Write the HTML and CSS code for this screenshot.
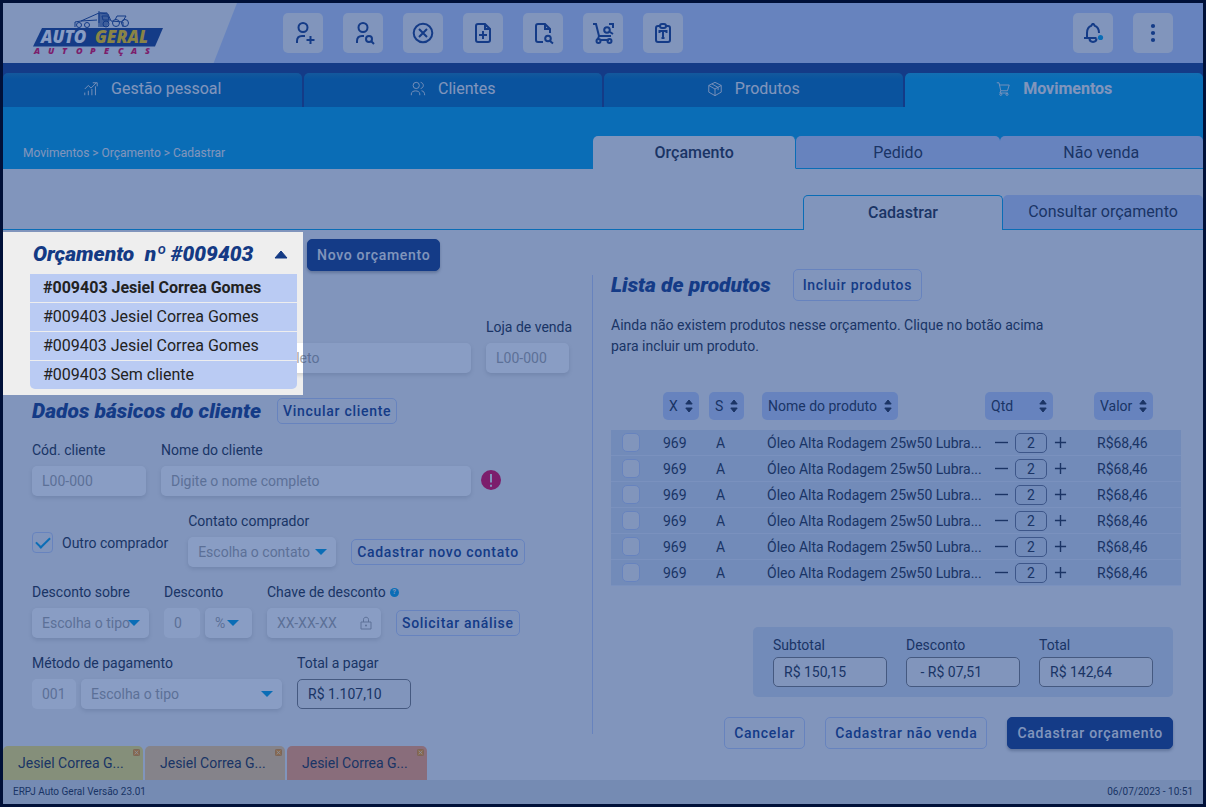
FILE: index.html
```html
<!DOCTYPE html>
<html lang="pt-BR">
<head>
<meta charset="utf-8">
<title>ERPJ Auto Geral - Orçamento</title>
<meta name="viewport" content="width=device-width, initial-scale=1">
<link rel="stylesheet" href="styles.css">
</head>
<body>
<svg class="sprite" aria-hidden="true">
  <symbol id="sort" viewBox="0 0 8 14"><path d="M4 1 7.2 5H.8zM4 13 .8 9h6.400z" fill="currentColor" stroke="currentColor" stroke-width="1" stroke-linejoin="round"/></symbol>
  <symbol id="minus" viewBox="0 0 14 14"><path d="M0 7h14" stroke="currentColor" stroke-width="1.500"/></symbol>
  <symbol id="plus" viewBox="0 0 14 14"><path d="M1 7h12M7 1v12" stroke="currentColor" stroke-width="1.500"/></symbol>
  <symbol id="close" viewBox="0 0 8 8"><rect x=".5" y=".5" width="7" height="7" rx="1" fill="#ff9a1a" stroke="#e08a20"/><path d="M2 2l4 4M6 2 2 6" stroke="#fff0c8" stroke-width=".8"/></symbol>
</svg>
<div class="app">
  <header class="header">
    <div class="brand">
      <svg class="logo" viewBox="0 0 132 50" role="img" aria-label="Auto Geral Autopeças">
        <g fill="none" stroke="#143a84" stroke-width="1">
          <path d="M42 18v-5l6-1 18-8v10M66 2v16M67 4l8 1 3 7 12 1v5M69 7h6l1 4h-6zM48 12l16-1M90 12l3-5h-9l-2 4"/>
          <circle cx="46" cy="16" r="2.500"/><circle cx="54" cy="16" r="2.500"/><circle cx="73" cy="15" r="3"/><circle cx="83" cy="14" r="3.500"/><circle cx="92" cy="14" r="3.500"/>
        </g>
        <path d="M66 3h8l3 8-3 7h-7z" fill="#143a84" opacity=".6"/>
        <path d="M9 19H130l-8 18.500H0z" fill="#143a84"/>
        <text x="8" y="34" class="logo-main" fill="#fff">AUTO<tspan x="62" fill="#ffcc00">GERAL</tspan></text>
        <text y="45" class="logo-sub" fill="#e4004f" x="1 15 29 43 57 71 85 98 112">AUTOPEÇAS</text>
      </svg>
    </div>
    <div class="toolbar">
      <button class="tool" aria-label="Adicionar cliente"><svg viewBox="0 0 24 24"><circle cx="12" cy="6.500" r="4.500"/><path d="M6 22v-2c0-3 2-5 5-5h3M19.500 15v8M15.500 19h8"/></svg></button>
      <button class="tool" aria-label="Buscar cliente"><svg viewBox="0 0 24 24"><circle cx="12" cy="6.500" r="4.500"/><path d="M6 22v-2c0-3 2-5 5-5h2M20 20l3 3"/><circle cx="18" cy="18" r="3"/></svg></button>
      <button class="tool" aria-label="Cancelar"><svg viewBox="0 0 24 24"><circle cx="12" cy="12" r="9.300"/><path d="m8 8 8 8M16 8l-8 8"/></svg></button>
      <button class="tool" aria-label="Novo documento"><svg viewBox="0 0 24 24"><path d="M14 3H7a2 2 0 0 0-2 2v14a2 2 0 0 0 2 2h10a2 2 0 0 0 2-2V8zM14 3v5h5M12 10v8M8 14h8"/></svg></button>
      <button class="tool" aria-label="Buscar documento"><svg viewBox="0 0 24 24"><path d="M12 21H7a2 2 0 0 1-2-2V5a2 2 0 0 1 2-2h7l5 5v4M14 3v5h5M19 20l3 2.500"/><circle cx="17" cy="17.500" r="2.800"/></svg></button>
      <button class="tool" aria-label="Buscar vendas"><svg viewBox="0 0 24 24"><path d="M2 3h3l3 12h12M8 15l-1.500 4M18 3h4v4M19 11l3 2M9 19h9"/><circle cx="16" cy="9" r="2.800"/><circle cx="7.500" cy="20" r="2"/><circle cx="18.500" cy="20" r="2"/></svg></button>
      <button class="tool" aria-label="Tabela"><svg viewBox="0 0 24 24"><path d="M9 5H7a2 2 0 0 0-2 2v12a2 2 0 0 0 2 2h10a2 2 0 0 0 2-2V7a2 2 0 0 0-2-2h-2M8.500 12v-2h7v2M12 10v7M10.500 17h3"/><rect x="9" y="3" width="6" height="4" rx="2"/></svg></button>
    </div>
    <div class="toolbar toolbar-end">
      <button class="tool" aria-label="Notificações"><svg viewBox="0 0 24 24"><path d="M3 17h12.500M6 17v-5c0-4 2-6.500 4.300-7.300L11.500 3h1l1.200 1.700C16 5.500 18 8 18 12M8.500 17.500c0 4.500 7 4.500 7 0"/><circle class="dot" cx="19.500" cy="16.500" r="2.600"/></svg></button>
      <button class="tool" aria-label="Mais opções"><svg viewBox="0 0 24 24"><g fill="#143a84" stroke="none"><circle cx="12" cy="5" r="2.100"/><circle cx="12" cy="12" r="2.100"/><circle cx="12" cy="19" r="2.100"/></g></svg></button>
    </div>
  </header>

  <nav class="nav">
    <a class="nav-tab" href="#"><svg viewBox="0 0 18 18"><path d="M2 16v-3M6 16v-5M10 16V9M14 16V6M2 9l4-4 3 3 6-6M11 2h5v4"/></svg>Gestão pessoal</a>
    <a class="nav-tab" href="#"><svg viewBox="0 0 18 18"><circle cx="7" cy="5" r="3.500"/><path d="M1.500 16v-1.500c0-4.500 9.500-4.500 9.500 0V16M12 1.500c4 1 4 6 0 7M13 11c2.500.5 3.500 2 3.500 5"/></svg>Clientes</a>
    <a class="nav-tab" href="#"><svg viewBox="0 0 18 18"><path d="M9 1.500 16 5v7.500L9 16.500l-7-4V5zM2 5l7 4 7-4M9 9v7.500M5.500 3.300l7 4v3"/></svg>Produtos</a>
    <a class="nav-tab nav-tab-active" href="#"><svg viewBox="0 0 18 18"><path d="M2 2h2.500L6.500 11h7.500L16 4.500H5M6.500 11 5.500 13.500h9"/><circle cx="6.500" cy="15" r="1.200"/><circle cx="13.500" cy="15" r="1.200"/></svg>Movimentos</a>
  </nav>

  <div class="subheader">
    <p class="breadcrumb">Movimentos &gt; Orçamento &gt; Cadastrar</p>
    <nav class="section-tabs">
      <a class="section-tab section-tab-active" href="#">Orçamento</a>
      <a class="section-tab" href="#">Pedido</a>
      <a class="section-tab" href="#">Não venda</a>
    </nav>
  </div>

  <div class="mode-bar">
    <a class="mode-tab mode-tab-active" href="#">Cadastrar</a>
    <a class="mode-tab" href="#">Consultar orçamento</a>
  </div>

  <main class="main">
    <section class="customer">
      <div class="customer-head"><button class="btn btn-solid">Novo orçamento</button></div>
      <div class="row row-seller">
        <input class="input w-name" placeholder="Digite o nome completo" aria-label="Nome">
        <div class="field w-store"><label for="store">Loja de venda</label><input id="store" class="input" placeholder="L00-000"></div>
      </div>
      <div class="title-row">
        <h2 class="title">Dados básicos do cliente</h2>
        <button class="btn btn-small">Vincular cliente</button>
      </div>
      <div class="rows">
        <div class="row">
          <div class="field w-code"><label for="cod">Cód. cliente</label><input id="cod" class="input" placeholder="L00-000"></div>
          <div class="field w-name"><label for="name">Nome do cliente</label><input id="name" class="input" placeholder="Digite o nome completo"></div>
          <svg class="alert" viewBox="0 0 20 20" role="img" aria-label="Campo obrigatório"><circle cx="10" cy="10" r="10" fill="#e4004f"/><path d="M10 4v8.500M10 14.800v2" stroke="#eee" stroke-width="2"/></svg>
        </div>
        <div class="row row-buyer">
          <label class="check-label"><input type="checkbox" class="check" checked>Outro comprador</label>
          <div class="field w-contact"><label for="contact">Contato comprador</label><div class="select"><select id="contact" class="input"><option>Escolha o contato</option></select></div></div>
          <button class="btn btn-small">Cadastrar novo contato</button>
        </div>
        <div class="row">
          <div class="field w-type"><label for="dtype">Desconto sobre</label><div class="select"><select id="dtype" class="input"><option>Escolha o tipo</option></select></div></div>
          <div class="field">
            <label for="disc">Desconto</label>
            <div class="pair"><input id="disc" class="input input-flat w-number" placeholder="0"><div class="select select-unit w-unit"><select class="input" aria-label="Unidade"><option>%</option></select></div></div>
          </div>
          <div class="field w-code">
            <div class="label-line"><label for="key">Chave de desconto</label><button class="help" aria-label="Ajuda">?</button></div>
            <div class="locked"><input id="key" class="input" placeholder="XX-XX-XX"><svg viewBox="0 0 12 14"><path d="M1 6h10v7H1zM3.500 6V3.500c0-3 5-3 5 0V6" fill="none" stroke="#a5a5a5"/><circle cx="6" cy="9.500" r="1" fill="#a5a5a5"/></svg></div>
          </div>
          <button class="btn btn-small">Solicitar análise</button>
        </div>
        <div class="row">
          <div class="field w-payment">
            <label for="pay">Método de pagamento</label>
            <div class="pair"><input id="pay" class="input input-flat w-method" placeholder="001"><div class="select grow"><select class="input" aria-label="Tipo de pagamento"><option>Escolha o tipo</option></select></div></div>
          </div>
          <div class="field w-total"><label for="due">Total a pagar</label><input id="due" class="input input-line" value="R$ 1.107,10" readonly></div>
        </div>
      </div>
      <div class="drafts">
        <div class="draft draft-yellow"><span>Jesiel Correa G...</span><button aria-label="Fechar"><svg><use href="#close"/></svg></button></div>
        <div class="draft draft-sand"><span>Jesiel Correa G...</span><button aria-label="Fechar"><svg><use href="#close"/></svg></button></div>
        <div class="draft draft-coral"><span>Jesiel Correa G...</span><button aria-label="Fechar"><svg><use href="#close"/></svg></button></div>
      </div>
    </section>

    <div class="divider"></div>

    <section class="products">
      <div class="title-row products-head">
        <h2 class="title">Lista de produtos</h2>
        <button class="btn">Incluir produtos</button>
      </div>
      <p class="hint">Ainda não existem produtos nesse orçamento. Clique no botão acima para incluir um produto.</p>
      <table class="table">
        <colgroup><col class="c-check"><col class="c-x"><col class="c-s"><col class="c-name"><col class="c-qty"><col class="c-value"></colgroup>
        <thead>
          <tr>
            <th></th>
            <th><button class="sort">X<svg><use href="#sort"/></svg></button></th>
            <th><button class="sort">S<svg><use href="#sort"/></svg></button></th>
            <th><button class="sort">Nome do produto<svg><use href="#sort"/></svg></button></th>
            <th><button class="sort sort-wide">Qtd<svg><use href="#sort"/></svg></button></th>
            <th><button class="sort">Valor<svg><use href="#sort"/></svg></button></th>
          </tr>
        </thead>
        <tbody>
          <tr><td><input type="checkbox" class="pick" aria-label="Selecionar"></td><td>969</td><td class="t-s">A</td><td class="t-name">Óleo Alta Rodagem 25w50 Lubra...</td><td><div class="qty"><button aria-label="Menos"><svg><use href="#minus"/></svg></button><input value="2" aria-label="Quantidade"><button aria-label="Mais"><svg><use href="#plus"/></svg></button></div></td><td class="t-value">R$68,46</td></tr>
          <tr><td><input type="checkbox" class="pick" aria-label="Selecionar"></td><td>969</td><td class="t-s">A</td><td class="t-name">Óleo Alta Rodagem 25w50 Lubra...</td><td><div class="qty"><button aria-label="Menos"><svg><use href="#minus"/></svg></button><input value="2" aria-label="Quantidade"><button aria-label="Mais"><svg><use href="#plus"/></svg></button></div></td><td class="t-value">R$68,46</td></tr>
          <tr><td><input type="checkbox" class="pick" aria-label="Selecionar"></td><td>969</td><td class="t-s">A</td><td class="t-name">Óleo Alta Rodagem 25w50 Lubra...</td><td><div class="qty"><button aria-label="Menos"><svg><use href="#minus"/></svg></button><input value="2" aria-label="Quantidade"><button aria-label="Mais"><svg><use href="#plus"/></svg></button></div></td><td class="t-value">R$68,46</td></tr>
          <tr><td><input type="checkbox" class="pick" aria-label="Selecionar"></td><td>969</td><td class="t-s">A</td><td class="t-name">Óleo Alta Rodagem 25w50 Lubra...</td><td><div class="qty"><button aria-label="Menos"><svg><use href="#minus"/></svg></button><input value="2" aria-label="Quantidade"><button aria-label="Mais"><svg><use href="#plus"/></svg></button></div></td><td class="t-value">R$68,46</td></tr>
          <tr><td><input type="checkbox" class="pick" aria-label="Selecionar"></td><td>969</td><td class="t-s">A</td><td class="t-name">Óleo Alta Rodagem 25w50 Lubra...</td><td><div class="qty"><button aria-label="Menos"><svg><use href="#minus"/></svg></button><input value="2" aria-label="Quantidade"><button aria-label="Mais"><svg><use href="#plus"/></svg></button></div></td><td class="t-value">R$68,46</td></tr>
          <tr><td><input type="checkbox" class="pick" aria-label="Selecionar"></td><td>969</td><td class="t-s">A</td><td class="t-name">Óleo Alta Rodagem 25w50 Lubra...</td><td><div class="qty"><button aria-label="Menos"><svg><use href="#minus"/></svg></button><input value="2" aria-label="Quantidade"><button aria-label="Mais"><svg><use href="#plus"/></svg></button></div></td><td class="t-value">R$68,46</td></tr>
        </tbody>
      </table>
      <div class="totals">
        <div class="field w-total"><label for="sub">Subtotal</label><input id="sub" class="input input-line" value="R$ 150,15" readonly></div>
        <div class="field w-total"><label for="off">Desconto</label><input id="off" class="input input-line" value=" - R$ 07,51" readonly></div>
        <div class="field w-total"><label for="tot">Total</label><input id="tot" class="input input-line" value="R$ 142,64" readonly></div>
      </div>
      <div class="actions">
        <button class="btn">Cancelar</button>
        <button class="btn">Cadastrar não venda</button>
        <button class="btn btn-solid">Cadastrar orçamento</button>
      </div>
    </section>

    <div class="spotlight">
      <button class="title picker" aria-expanded="true"><span>Orçamento &nbsp;nº #009403</span><svg viewBox="0 0 14 9"><path d="M7 1 13 8H1z" fill="#143a84" stroke="#143a84" stroke-linejoin="round"/></svg></button>
      <ul class="picker-list">
        <li><a class="picker-current" href="#">#009403 Jesiel Correa Gomes</a></li>
        <li><a href="#">#009403 Jesiel Correa Gomes</a></li>
        <li><a href="#">#009403 Jesiel Correa Gomes</a></li>
        <li><a href="#">#009403 Sem cliente</a></li>
      </ul>
    </div>
  </main>

  <footer class="footer"><span>ERPJ Auto Geral Versão 23.01</span><time>06/07/2023 - 10:51</time></footer>
</div>
</body>
</html>
```
FILE: styles.css
```css
:root {
  --page: #eee;
  --navy: #143a84;
  --cyan: #009fe3;
  --soft: #bacbf3;
  --mist: #d0dae8;
  --text: #222c40;
  --muted: #a5a5a5;
}
* { box-sizing: border-box; }
body { margin: 0; font: 14px/16px Roboto, "Liberation Sans", sans-serif; color: var(--text); }
button, input, select { font: inherit; color: inherit; margin: 0; padding: 0; border: 0; background: none; }
a { color: inherit; text-decoration: none; }
h2, p, ul { margin: 0; padding: 0; }
ul { list-style: none; }
svg { display: block; flex: none; }
.sprite { position: absolute; width: 0; height: 0; }

.app { display: flex; flex-direction: column; min-height: 100vh; border: 3px solid #001038; background: var(--page); overflow: hidden; }

.header { display: flex; align-items: center; height: 60px; padding-right: 30px; background: var(--soft); }
.brand { width: 234px; height: 60px; padding: 6px 0 0 30px; background: var(--page); clip-path: polygon(0 0, 100% 0, 90% 100%, 0 100%); }
.logo { width: 132px; height: 50px; overflow: visible; }
.logo-main { font: italic 800 17px "Open Sans", sans-serif; }
.logo-sub { font: italic 800 9px "Open Sans", sans-serif; }
.toolbar { display: flex; gap: 20px; margin-left: 46px; }
.toolbar-end { margin-left: auto; }
.tool { display: grid; place-items: center; width: 40px; height: 40px; border-radius: 5px; background: var(--page); }
.tool svg { width: 24px; height: 24px; fill: none; stroke: var(--navy); stroke-width: 2; }
.tool .dot { fill: var(--cyan); stroke: none; }

.nav { display: grid; grid-template-columns: repeat(4, 1fr); gap: 2px; padding-top: 10px; background: var(--navy); }
.nav-tab { display: flex; align-items: center; justify-content: center; gap: 12px; height: 34px; padding-bottom: 3px; border-radius: 5px 5px 0 0; background: linear-gradient(#1576b0, #006bb2 6px); color: var(--page); font-size: 16px; }
.nav-tab svg { width: 16px; height: 16px; fill: none; stroke: var(--page); stroke-width: 1; }
.nav-tab-active { background: linear-gradient(#12a2dc, var(--cyan) 6px); font-weight: 700; }

.subheader { display: grid; grid-template-columns: 590fr 610fr; align-items: end; height: 62px; background: var(--cyan); }
.breadcrumb { padding: 0 0 8px 20px; color: var(--page); font-size: 12px; }
.section-tabs { display: grid; grid-template-columns: repeat(3, 1fr); }
.section-tab { height: 33px; border-bottom: 1px solid var(--cyan); border-radius: 5px 5px 0 0; background: var(--soft); font-size: 16px; line-height: 33px; text-align: center; }
.section-tab-active { border-right: 1px solid var(--cyan); border-bottom-color: var(--page); background: var(--page); font-weight: 500; }

.mode-bar { display: flex; align-items: flex-end; height: 61px; }
.mode-bar::before { content: ""; flex: 1; border-bottom: 1px solid var(--cyan); }
.mode-tab { flex: 0 0 200px; height: 35px; border-bottom: 1px solid var(--cyan); border-radius: 5px 5px 0 0; background: var(--soft); font-size: 16px; line-height: 34px; text-align: center; }
.mode-tab-active { border: 1px solid var(--cyan); border-bottom: 0; background: none; font-weight: 500; }

.main { position: relative; display: grid; grid-template-columns: 589fr 1px 610fr; flex: 1; }
.divider { margin: 45px 0 46px; background: var(--soft); }

.title { color: var(--navy); font-size: 21px; font-style: italic; font-weight: 900; line-height: 24px; white-space: nowrap; }
.title-row { display: flex; align-items: center; gap: 16px; }
.btn { height: 32px; padding: 0 9px; border: 1px solid var(--soft); border-radius: 5px; color: var(--navy); font-weight: 500; letter-spacing: .05em; white-space: nowrap; }
.btn-small { height: 26px; padding: 0 5px; }
.btn-solid { border-color: var(--navy); background: var(--navy); color: var(--page); box-shadow: 0 2px 3px #0004; }

.customer { display: flex; flex-direction: column; padding-top: 9px; }
.customer-head { padding-left: 304px; }
.row { display: flex; align-items: flex-end; gap: 15px; }
.row-seller { padding: 48px 0 25px 158px; }
.customer .title-row { padding-left: 29px; }
.rows { display: grid; gap: 17px; padding: 18px 0 0 29px; }
.row .btn-small { margin-bottom: 2px; }
.alert { width: 20px; height: 20px; margin: 0 0 6px -5px; }
.field { display: grid; grid-template-columns: minmax(0, 1fr); gap: 8px; white-space: nowrap; }
.label-line { display: flex; align-items: center; gap: 4px; }
.help { flex: none; width: 9px; height: 9px; border-radius: 50%; background: var(--cyan); color: var(--page); font-size: 7px; font-weight: 700; line-height: 9px; }
.input { width: 100%; height: 30px; padding: 0 10px; border-radius: 5px; background: #fff; box-shadow: 0 2px 4px #0002; }
.input::placeholder { color: var(--muted); opacity: 1; }
.input.w-name { width: 310px; }
.input-flat { box-shadow: none; }
.input-line { border: 1px solid #777; background: none; box-shadow: none; }
.select { position: relative; }
.select select { appearance: none; color: var(--muted); }
.select::after { content: ""; position: absolute; top: 12px; right: 9px; border: solid transparent; border-width: 6px 6px 0; border-top-color: var(--cyan); pointer-events: none; }
.select-unit::after { right: 13px; }
.pair { display: flex; gap: 5px; }
.grow { flex: 1; }
.locked { position: relative; }
.locked svg { position: absolute; top: 8px; right: 9px; width: 12px; height: 14px; }
.w-code { width: 114px; }
.w-name { width: 310px; }
.w-store { width: 83px; }
.w-contact { width: 148px; }
.w-type { width: 117px; }
.input.w-number { width: 36px; }
.w-unit { width: 47px; }
.input.w-method { width: 44px; }
.w-payment { width: 250px; }
.w-total { width: 114px; }
.row-buyer .field { margin-left: 5px; }
.check-label { display: flex; align-items: center; gap: 9px; margin-bottom: 14px; white-space: nowrap; }
.check { appearance: none; display: grid; place-items: center; width: 21px; height: 21px; border: 1px solid var(--soft); border-radius: 4px; }
.check:checked::after { content: ""; width: 12px; height: 6px; border: solid var(--cyan); border-width: 0 0 2px 2px; transform: translateY(-2px) rotate(-45deg); }

.drafts { display: flex; gap: 2px; margin-top: auto; }
.draft { display: flex; justify-content: space-between; width: 140px; height: 34px; padding: 3px 3px 0 15px; border-radius: 5px 5px 0 0; font-size: 14px; line-height: 28px; white-space: nowrap; }
.draft button { width: 7px; height: 7px; }
.draft svg { width: 7px; height: 7px; }
.draft-yellow { background: #f6e26a; }
.draft-sand { background: #f6cb8b; }
.draft-coral { background: #fe9f6d; }

.products { padding: 39px 22px 30px 18px; }
.products-head { gap: 22px; }
.hint { max-width: 460px; margin: 14px 0 35px; line-height: 21px; }
.table { width: 100%; border-spacing: 0; table-layout: fixed; }
.c-check { width: 52px; }
.c-x { width: 46px; }
.c-s { width: 53px; }
.c-qty { width: 109px; }
.c-value { width: 87px; }
.table th { padding: 0 0 10px; text-align: left; font-weight: 400; }
.table td { height: 26px; padding: 0; border-bottom: 1px solid #e0e6f2; background: var(--mist); white-space: nowrap; }
.sort { display: flex; align-items: center; justify-content: space-between; gap: 7px; height: 28px; padding: 0 6px; border-radius: 5px; background: var(--soft); }
.sort svg { width: 8px; height: 14px; }
.sort-wide { width: 68px; }
.pick { appearance: none; display: block; width: 18px; height: 19px; margin-left: 11px; border: 1px solid var(--soft); border-radius: 5px; background: var(--page); }
.table .t-s { padding-left: 7px; }
.table .t-name { padding-left: 5px; }
.table .t-value { padding-left: 3px; }
.qty { display: flex; align-items: center; gap: 7px; padding-left: 10px; }
.qty button, .qty svg { width: 13px; height: 13px; }
.qty input { width: 32px; height: 20px; border: 1px solid #667088; border-radius: 5px; text-align: center; }
.totals { display: flex; gap: 19px; width: fit-content; margin: 41px 8px 20px auto; padding: 10px 20px; border-radius: 5px; background: var(--mist); }
.totals .field { gap: 4px; }
.totals .input { background: var(--page); }
.actions { display: flex; justify-content: flex-end; gap: 20px; margin-right: 8px; }

/* Lit area around the open budget picker; its shadow dims the rest of the page */
.spotlight { position: absolute; z-index: 5; top: 2px; left: 0; width: 300px; height: 163px; padding: 10px 6px 0 27px; box-shadow: 0 0 0 3000px rgba(20, 60, 138, .5); }
.picker { display: flex; align-items: center; justify-content: space-between; width: 100%; padding: 0 9px 0 3px; }
.picker svg { width: 14px; height: 9px; }
.picker-list { display: grid; gap: 1px; margin-top: 8px; border-radius: 0 0 5px 5px; background: var(--page); overflow: hidden; }
.picker-list a { display: block; padding-left: 13px; background: var(--soft); color: #222; font-size: 16px; line-height: 28px; }
.picker-list .picker-current { font-weight: 700; }

.footer { display: flex; justify-content: space-between; align-items: center; height: 24px; padding: 0 10px; background: #d6dadc; font-size: 10px; }
```
